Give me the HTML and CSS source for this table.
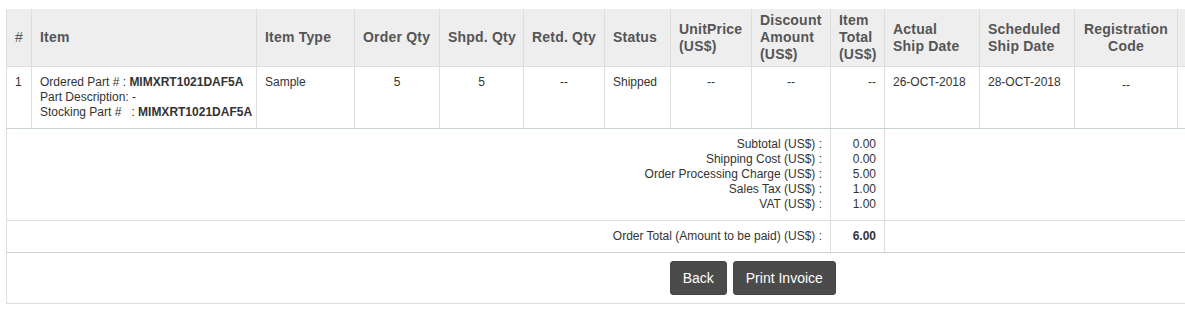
FILE: index.html
```html
<!DOCTYPE html>
<html lang="en">
    <head>
        <meta charset="UTF-8">
        <title>Order Details</title>
        <link rel="stylesheet" href="styles.css">
    </head>
    <body>
        <div class="page">
            <table class="order">
                <colgroup>
                    <col class="c-no">
                    <col class="c-item">
                    <col class="c-type">
                    <col class="c-qty">
                    <col class="c-shpd">
                    <col class="c-retd">
                    <col class="c-status">
                    <col class="c-price">
                    <col class="c-disc">
                    <col class="c-total">
                    <col class="c-date">
                    <col class="c-date">
                    <col class="c-reg">
                    <col class="c-track">
                </colgroup>
                <thead>
                    <tr>
                        <th class="no">#</th>
                        <th>Item</th>
                        <th>Item Type</th>
                        <th class="nowrap">Order Qty</th>
                        <th class="nowrap">Shpd. Qty</th>
                        <th class="nowrap">Retd. Qty</th>
                        <th>Status</th>
                        <th>UnitPrice (US$)</th>
                        <th>Discount Amount (US$)</th>
                        <th>Item Total (US$)</th>
                        <th>Actual<br>Ship Date</th>
                        <th>Scheduled<br>Ship Date</th>
                        <th class="center">Registration Code</th>
                        <th></th>
                    </tr>
                </thead>
                <tbody>
                    <tr class="item_row">
                        <td>1</td>
                        <td>
                            <span class="lbl">Ordered Part # : </span><b>MIMXRT1021DAF5A</b><br>
                            Part Description: -<br>
                            <span class="lbl">Stocking Part #   : </span><b>MIMXRT1021DAF5A</b>
                        </td>
                        <td>Sample</td>
                        <td class="center">5</td>
                        <td class="center">5</td>
                        <td class="center">--</td>
                        <td>Shipped</td>
                        <td class="center">--</td>
                        <td class="center">--</td>
                        <td class="right">--</td>
                        <td>26-OCT-2018</td>
                        <td>28-OCT-2018</td>
                        <td class="center reg">--</td>
                        <td></td>
                    </tr>
                </tbody>
                <tbody class="totals">
                    <tr>
                        <td colspan="9" class="right">
                            Subtotal (US$) :<br>
                            Shipping Cost (US$) :<br>
                            Order Processing Charge (US$) :<br>
                            Sales Tax (US$) :<br>
                            VAT (US$) :
                        </td>
                        <td class="right">0.00<br>0.00<br>5.00<br>1.00<br>1.00</td>
                        <td colspan="4"></td>
                    </tr>
                    <tr class="grand">
                        <td colspan="9" class="right">Order Total (Amount to be paid) (US$) :</td>
                        <td class="right"><b>6.00</b></td>
                        <td colspan="4"></td>
                    </tr>
                    <tr>
                        <td colspan="14" class="actions">
                            <div class="btns">
                                <button class="btn">Back</button>
                                <button class="btn">Print Invoice</button>
                            </div>
                        </td>
                    </tr>
                </tbody>
            </table>
        </div>
    </body>
</html>
```

FILE: styles.css
```css
body{margin:0;background-color:white;font-family:"Liberation Sans",Arial,sans-serif;color:#333;}
.page{padding:9px 0 0 6px;}
.order{border-collapse:collapse;table-layout:fixed;width:1492px;}
/* 列幅 */
.c-no{width:25px;}
.c-item{width:225px;}
.c-type{width:98px;}
.c-qty{width:85px;}
.c-shpd{width:84px;}
.c-retd{width:81px;}
.c-status{width:66px;}
.c-price{width:81px;}
.c-disc{width:79px;}
.c-total{width:54px;}
.c-date{width:95px;}
.c-reg{width:103px;}
.c-track{width:321px;}
/* 見出し */
.order th{background-color:#eeeeef;color:#555;font-size:14px;line-height:17px;font-weight:bold;letter-spacing:0.2px;text-align:left;vertical-align:middle;padding:3px 8px;border:1px solid #dddddd;border-top:none;height:50px;}
.order th.no{font-weight:normal;}
.order th.nowrap{white-space:nowrap;}
.order td{font-size:12px;line-height:15px;padding:8px;vertical-align:top;border:1px solid #dddddd;}
.lbl{white-space:pre;}
.center{text-align:center;}
.order th.center{text-align:center;}
.right{text-align:right;}
.reg{padding-top:11px !important;}
.item_row td{border-bottom-color:#c9d4d4;}
.grand td{border-bottom-color:#c9d4d4;}
.totals td{vertical-align:top;}
.order td.actions{padding:8px;border-right:none;}
.btns{display:flex;justify-content:center;gap:6px;}
/* ボタン */
.btn{font-family:"Liberation Sans",Arial,sans-serif;font-size:14px;color:white;background-color:#4b4b4b;border:1px solid #444;border-radius:3px;height:34px;padding:0 12px;cursor:pointer;}
.btn:hover{background-color:#333;}
```
